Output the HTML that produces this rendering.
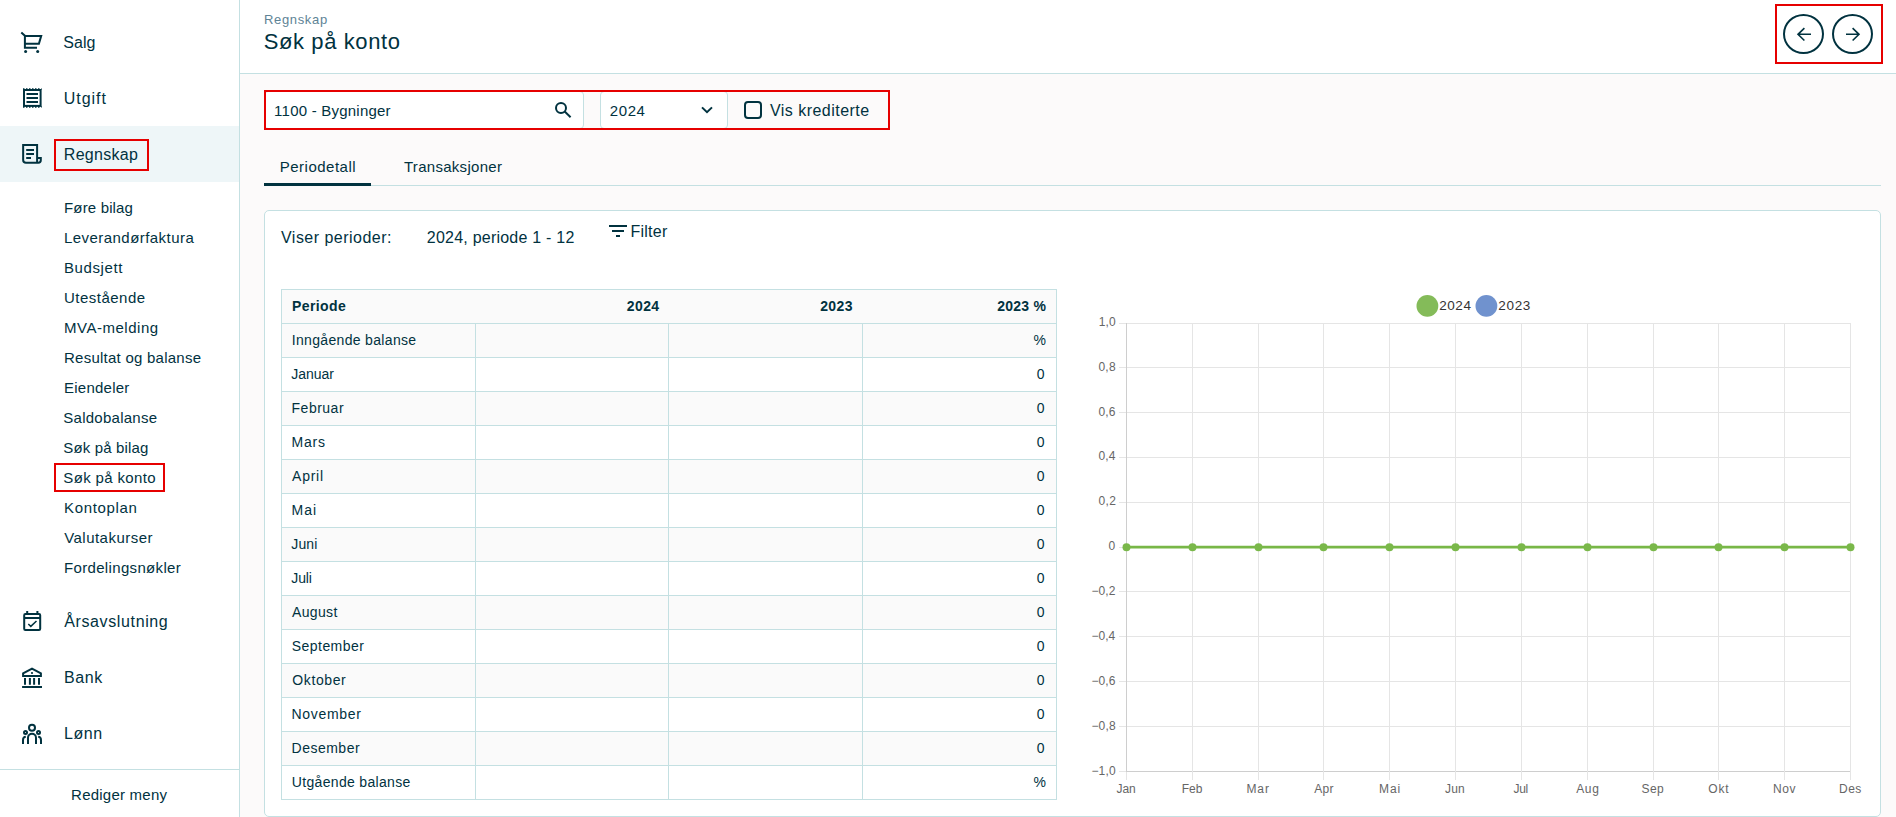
<!DOCTYPE html>
<html lang="no">
<head>
<meta charset="utf-8">
<title>Søk på konto</title>
<style>
*{box-sizing:border-box;margin:0;padding:0}
html,body{width:1896px;height:817px;overflow:hidden}
body{font-family:"Liberation Sans",sans-serif;color:#01323f;background:#fcfafa;position:relative}
.b,.ic,.t{position:absolute}
.t{line-height:20px;white-space:nowrap}
.red{border:2px solid #e60000}
</style>
</head>
<body>
<div class="b" style="left:0px;top:0px;width:239px;height:817px;background:#fff;"></div>
<div class="b" style="left:239px;top:0px;width:1px;height:817px;background:#c4e0e2;"></div>
<div class="b" style="left:0px;top:126px;width:239px;height:56px;background:#eef6f8;"></div>
<div class="b" style="left:0px;top:769px;width:239px;height:1px;background:#c4e0e2;"></div>
<svg class="ic" style="left:20px;top:30px" width="24" height="24" viewBox="0 0 24 24" fill="none" stroke="#01323f" stroke-width="2"><path d="M1.3 2.4 L4.9 5.7 V17.8 H17 M4.9 5.9 H21.2 L18.9 13.8 H4.9"/><circle cx="5.6" cy="21.4" r="1.5" fill="#01323f" stroke="none"/><circle cx="17.7" cy="21.4" r="1.5" fill="#01323f" stroke="none"/></svg>
<svg class="ic" style="left:20px;top:86px" width="24" height="24" viewBox="0 0 24 24" fill="none" stroke="#01323f" stroke-width="2"><rect x="4" y="4" width="16.6" height="15.9"/><path d="M6.5 8 H18 M6.5 12 H18 M6.5 16 H18"/><path d="M3 3 h18.6" stroke-dasharray="1.5 1.5" stroke-width="1.6"/><path d="M3 20.9 h18.6" stroke-dasharray="1.5 1.5" stroke-width="1.6"/></svg>
<svg class="ic" style="left:20px;top:142px" width="24" height="24" viewBox="0 0 24 24" fill="none" stroke="#01323f" stroke-width="2"><path d="M17.1 20.7 V2.9 H3.15 V18 Q3.15 20.75 6 20.75 H18.3 Q20.8 20.75 20.8 18.3 V16.1 H17.1"/><path d="M6.2 8 H14 M6.2 12 H14 M6.2 16 H11"/></svg>
<svg class="ic" style="left:20px;top:609px" width="24" height="24" viewBox="0 0 24 24" fill="none" stroke="#01323f" stroke-width="2"><rect x="4.2" y="5.1" width="16" height="15.8" rx="1.2"/><path d="M4.2 9 H20.2 M7.2 2 V5 M17.4 2 V5"/><path d="M8.3 15 L10.8 17.4 L16.5 12" stroke-width="1.5"/></svg>
<svg class="ic" style="left:20px;top:665px" width="24" height="24" viewBox="0 0 24 24" fill="none" stroke="#01323f" stroke-width="2"><path d="M3.1 10.9 V8.4 L12 3.6 L20.9 8.4 V10.9 Z"/><circle cx="12" cy="8" r="1.1" fill="#01323f" stroke="none"/><path d="M5 13 V19.8 M9.9 13 V19.8 M14.1 13 V19.8 M19 13 V19.8 M2.1 22 H22"/></svg>
<svg class="ic" style="left:20px;top:721px" width="24" height="24" viewBox="0 0 24 24" fill="none" stroke="#01323f" stroke-width="2"><circle cx="12" cy="6.8" r="3"/><circle cx="5.5" cy="11.4" r="1.5"/><circle cx="18.5" cy="11.4" r="1.5"/><path d="M8 23 V16.7 a4 4 0 0 1 8 0 V23 M3 23 V19 Q3 16 5.8 15.8 M21 23 V19 Q21 16 18.2 15.8"/></svg>
<div class="b red" style="left:54px;top:139px;width:95px;height:32px"></div>
<div class="b red" style="left:54px;top:463px;width:111px;height:29px"></div>
<div class="b" style="left:240px;top:0px;width:1656px;height:73px;background:#fff;"></div>
<div class="b" style="left:240px;top:73px;width:1656px;height:1px;background:#c4e0e2;"></div>
<div class="b" style="left:1783.0px;top:14px;width:41px;height:40px;border:2px solid #01323f;border-radius:50%"></div>
<svg class="ic" style="left:1794.0px;top:24px" width="20" height="20" viewBox="0 0 20 20" fill="none" stroke="#01323f" stroke-width="1.6"><path d="M17 10.3 H4 M10.4 4.2 L4 10.3 L10.4 16.5"/></svg>
<div class="b" style="left:1832.0px;top:14px;width:41px;height:40px;border:2px solid #01323f;border-radius:50%"></div>
<svg class="ic" style="left:1842.5px;top:24px" width="20" height="20" viewBox="0 0 20 20" fill="none" stroke="#01323f" stroke-width="1.6"><path d="M3 10.3 H16 M9.6 4.2 L16 10.3 L9.6 16.5"/></svg>
<div class="b red" style="left:1775px;top:4px;width:108px;height:60px"></div>
<div class="b" style="left:264px;top:91px;width:320px;height:38px;background:#fff;border:1px solid #c4e0e2;border-radius:4px"></div>
<svg class="ic" style="left:552px;top:98px" width="24" height="24" viewBox="0 0 24 24" fill="none" stroke="#01323f" stroke-width="2"><circle cx="9" cy="9.9" r="5"/><path d="M12.7 13.6 L18.6 19.2"/></svg>
<div class="b" style="left:600px;top:91px;width:128px;height:38px;background:#fff;border:1px solid #c4e0e2;border-radius:4px"></div>
<svg class="ic" style="left:695px;top:98px" width="24" height="24" viewBox="0 0 24 24" fill="none" stroke="#01323f" stroke-width="2"><path d="M7 9.4 L12 14.2 L17 9.4"/></svg>
<div class="b" style="left:744px;top:101px;width:18px;height:18px;background:transparent;border:2px solid #01323f;border-radius:4px"></div>
<div class="b red" style="left:264px;top:90px;width:626px;height:40px"></div>
<div class="b" style="left:264px;top:185px;width:1617px;height:1px;background:#c4e0e2;"></div>
<div class="b" style="left:264px;top:183px;width:107px;height:3px;background:#01323f;"></div>
<div class="b" style="left:264px;top:210px;width:1617px;height:607px;background:#fff;border:1px solid #c4e0e2;border-radius:5px"></div>
<svg class="ic" style="left:606px;top:219px" width="24" height="24" viewBox="0 0 24 24" fill="#01323f"><path d="M3 6h18v2H3zM6 11h12v2H6zM10 16h4v2h-4z"/></svg>
<div class="b" style="left:281px;top:289px;width:776px;height:511px;background:#fff;"></div>
<div class="b" style="left:281px;top:289px;width:776px;height:34px;background:#fafafa;"></div>
<div class="b" style="left:281px;top:323px;width:776px;height:34px;background:#fafafa;"></div>
<div class="b" style="left:281px;top:391px;width:776px;height:34px;background:#fafafa;"></div>
<div class="b" style="left:281px;top:459px;width:776px;height:34px;background:#fafafa;"></div>
<div class="b" style="left:281px;top:527px;width:776px;height:34px;background:#fafafa;"></div>
<div class="b" style="left:281px;top:595px;width:776px;height:34px;background:#fafafa;"></div>
<div class="b" style="left:281px;top:663px;width:776px;height:34px;background:#fafafa;"></div>
<div class="b" style="left:281px;top:731px;width:776px;height:34px;background:#fafafa;"></div>
<div class="b" style="left:281px;top:289px;width:776px;height:1px;background:#c4e0e2;"></div>
<div class="b" style="left:281px;top:323px;width:776px;height:1px;background:#c4e0e2;"></div>
<div class="b" style="left:281px;top:357px;width:776px;height:1px;background:#c4e0e2;"></div>
<div class="b" style="left:281px;top:391px;width:776px;height:1px;background:#c4e0e2;"></div>
<div class="b" style="left:281px;top:425px;width:776px;height:1px;background:#c4e0e2;"></div>
<div class="b" style="left:281px;top:459px;width:776px;height:1px;background:#c4e0e2;"></div>
<div class="b" style="left:281px;top:493px;width:776px;height:1px;background:#c4e0e2;"></div>
<div class="b" style="left:281px;top:527px;width:776px;height:1px;background:#c4e0e2;"></div>
<div class="b" style="left:281px;top:561px;width:776px;height:1px;background:#c4e0e2;"></div>
<div class="b" style="left:281px;top:595px;width:776px;height:1px;background:#c4e0e2;"></div>
<div class="b" style="left:281px;top:629px;width:776px;height:1px;background:#c4e0e2;"></div>
<div class="b" style="left:281px;top:663px;width:776px;height:1px;background:#c4e0e2;"></div>
<div class="b" style="left:281px;top:697px;width:776px;height:1px;background:#c4e0e2;"></div>
<div class="b" style="left:281px;top:731px;width:776px;height:1px;background:#c4e0e2;"></div>
<div class="b" style="left:281px;top:765px;width:776px;height:1px;background:#c4e0e2;"></div>
<div class="b" style="left:281px;top:799px;width:776px;height:1px;background:#c4e0e2;"></div>
<div class="b" style="left:281px;top:289px;width:1px;height:511px;background:#c4e0e2;"></div>
<div class="b" style="left:1056px;top:289px;width:1px;height:511px;background:#c4e0e2;"></div>
<div class="b" style="left:475px;top:323px;width:1px;height:477px;background:#c4e0e2;"></div>
<div class="b" style="left:668px;top:323px;width:1px;height:477px;background:#c4e0e2;"></div>
<div class="b" style="left:862px;top:323px;width:1px;height:477px;background:#c4e0e2;"></div>
<svg class="ic" style="left:1080px;top:290px" width="800" height="520" viewBox="0 0 800 520" shape-rendering="crispEdges"><rect x="46" y="33" width="725" height="1" fill="#e5e5e5"/><rect x="39" y="33" width="7" height="1" fill="#e5e5e5"/><rect x="46" y="77" width="725" height="1" fill="#e5e5e5"/><rect x="39" y="77" width="7" height="1" fill="#e5e5e5"/><rect x="46" y="122" width="725" height="1" fill="#e5e5e5"/><rect x="39" y="122" width="7" height="1" fill="#e5e5e5"/><rect x="46" y="167" width="725" height="1" fill="#e5e5e5"/><rect x="39" y="167" width="7" height="1" fill="#e5e5e5"/><rect x="46" y="212" width="725" height="1" fill="#e5e5e5"/><rect x="39" y="212" width="7" height="1" fill="#e5e5e5"/><rect x="46" y="257" width="725" height="1" fill="#cecece"/><rect x="39" y="257" width="7" height="1" fill="#e5e5e5"/><rect x="46" y="301" width="725" height="1" fill="#e5e5e5"/><rect x="39" y="301" width="7" height="1" fill="#e5e5e5"/><rect x="46" y="346" width="725" height="1" fill="#e5e5e5"/><rect x="39" y="346" width="7" height="1" fill="#e5e5e5"/><rect x="46" y="391" width="725" height="1" fill="#e5e5e5"/><rect x="39" y="391" width="7" height="1" fill="#e5e5e5"/><rect x="46" y="436" width="725" height="1" fill="#e5e5e5"/><rect x="39" y="436" width="7" height="1" fill="#e5e5e5"/><rect x="46" y="481" width="725" height="1" fill="#cecece"/><rect x="39" y="481" width="7" height="1" fill="#e5e5e5"/><rect x="46" y="33" width="1" height="449" fill="#cecece"/><rect x="46" y="482" width="1" height="8" fill="#e5e5e5"/><rect x="112" y="33" width="1" height="449" fill="#e5e5e5"/><rect x="112" y="482" width="1" height="8" fill="#e5e5e5"/><rect x="178" y="33" width="1" height="449" fill="#e5e5e5"/><rect x="178" y="482" width="1" height="8" fill="#e5e5e5"/><rect x="243" y="33" width="1" height="449" fill="#e5e5e5"/><rect x="243" y="482" width="1" height="8" fill="#e5e5e5"/><rect x="309" y="33" width="1" height="449" fill="#e5e5e5"/><rect x="309" y="482" width="1" height="8" fill="#e5e5e5"/><rect x="375" y="33" width="1" height="449" fill="#e5e5e5"/><rect x="375" y="482" width="1" height="8" fill="#e5e5e5"/><rect x="441" y="33" width="1" height="449" fill="#e5e5e5"/><rect x="441" y="482" width="1" height="8" fill="#e5e5e5"/><rect x="507" y="33" width="1" height="449" fill="#e5e5e5"/><rect x="507" y="482" width="1" height="8" fill="#e5e5e5"/><rect x="573" y="33" width="1" height="449" fill="#e5e5e5"/><rect x="573" y="482" width="1" height="8" fill="#e5e5e5"/><rect x="638" y="33" width="1" height="449" fill="#e5e5e5"/><rect x="638" y="482" width="1" height="8" fill="#e5e5e5"/><rect x="704" y="33" width="1" height="449" fill="#e5e5e5"/><rect x="704" y="482" width="1" height="8" fill="#e5e5e5"/><rect x="770" y="33" width="1" height="449" fill="#e5e5e5"/><rect x="770" y="482" width="1" height="8" fill="#e5e5e5"/><g shape-rendering="auto"><path d="M46.5 257.20000000000005 H770.5" stroke="#78b747" stroke-width="2.7"/><circle cx="46.5" cy="257.20000000000005" r="4" fill="#7ab84a"/><circle cx="112.5" cy="257.20000000000005" r="4" fill="#7ab84a"/><circle cx="178.5" cy="257.20000000000005" r="4" fill="#7ab84a"/><circle cx="243.5" cy="257.20000000000005" r="4" fill="#7ab84a"/><circle cx="309.5" cy="257.20000000000005" r="4" fill="#7ab84a"/><circle cx="375.5" cy="257.20000000000005" r="4" fill="#7ab84a"/><circle cx="441.5" cy="257.20000000000005" r="4" fill="#7ab84a"/><circle cx="507.5" cy="257.20000000000005" r="4" fill="#7ab84a"/><circle cx="573.5" cy="257.20000000000005" r="4" fill="#7ab84a"/><circle cx="638.5" cy="257.20000000000005" r="4" fill="#7ab84a"/><circle cx="704.5" cy="257.20000000000005" r="4" fill="#7ab84a"/><circle cx="770.5" cy="257.20000000000005" r="4" fill="#7ab84a"/><circle cx="347.4000000000001" cy="15.899999999999977" r="10.9" fill="#84bb59"/><circle cx="406.4000000000001" cy="15.899999999999977" r="10.9" fill="#7092ce"/></g></svg>
<span class="t" id="m0" style="left:63.37px;top:33.00px;font-size:16px;letter-spacing:0.023px;">Salg</span>
<span class="t" id="m1" style="left:63.72px;top:89.00px;font-size:16px;letter-spacing:0.975px;">Utgift</span>
<span class="t" id="m2" style="left:63.83px;top:145.00px;font-size:16px;letter-spacing:0.273px;">Regnskap</span>
<span class="t" id="m3" style="left:64.22px;top:612.00px;font-size:16px;letter-spacing:0.625px;">Årsavslutning</span>
<span class="t" id="m4" style="left:63.96px;top:668.00px;font-size:16px;letter-spacing:0.582px;">Bank</span>
<span class="t" id="m5" style="left:63.96px;top:724.00px;font-size:16px;letter-spacing:0.581px;">Lønn</span>
<span class="t" id="s0" style="left:64.01px;top:198.00px;font-size:15px;letter-spacing:0.159px;">Føre bilag</span>
<span class="t" id="s1" style="left:64.01px;top:228.00px;font-size:15px;letter-spacing:0.449px;">Leverandørfaktura</span>
<span class="t" id="s2" style="left:64.01px;top:258.00px;font-size:15px;letter-spacing:0.588px;">Budsjett</span>
<span class="t" id="s3" style="left:64.04px;top:288.00px;font-size:15px;letter-spacing:0.477px;">Utestående</span>
<span class="t" id="s4" style="left:63.96px;top:318.00px;font-size:15px;letter-spacing:0.523px;">MVA-melding</span>
<span class="t" id="s5" style="left:64.01px;top:348.00px;font-size:15px;letter-spacing:0.247px;">Resultat og balanse</span>
<span class="t" id="s6" style="left:64.01px;top:378.00px;font-size:15px;letter-spacing:0.237px;">Eiendeler</span>
<span class="t" id="s7" style="left:63.36px;top:408.00px;font-size:15px;letter-spacing:0.246px;">Saldobalanse</span>
<span class="t" id="s8" style="left:63.36px;top:438.00px;font-size:15px;letter-spacing:0.135px;">Søk på bilag</span>
<span class="t" id="s9" style="left:63.36px;top:468.00px;font-size:15px;letter-spacing:0.344px;">Søk på konto</span>
<span class="t" id="s10" style="left:64.01px;top:498.00px;font-size:15px;letter-spacing:0.666px;">Kontoplan</span>
<span class="t" id="s11" style="left:64.14px;top:528.00px;font-size:15px;letter-spacing:0.484px;">Valutakurser</span>
<span class="t" id="s12" style="left:64.01px;top:558.00px;font-size:15px;letter-spacing:0.336px;">Fordelingsnøkler</span>
<span class="t" id="foot" style="left:71.10px;top:785.00px;font-size:15px;letter-spacing:0.229px;">Rediger meny</span>
<span class="t" id="crumb" style="left:263.99px;top:10.00px;font-size:13px;letter-spacing:0.655px;color:#5e8396;">Regnskap</span>
<span class="t" id="title" style="left:263.71px;top:32.00px;font-size:22px;letter-spacing:0.604px;">Søk på konto</span>
<span class="t" id="inp" style="left:274.12px;top:101.00px;font-size:15px;letter-spacing:0.224px;">1100 - Bygninger</span>
<span class="t" id="sel" style="left:609.85px;top:101.00px;font-size:15px;letter-spacing:0.553px;">2024</span>
<span class="t" id="cbl" style="left:769.99px;top:101.00px;font-size:16px;letter-spacing:0.466px;">Vis krediterte</span>
<span class="t" id="tab0" style="left:279.79px;top:157.00px;font-size:15px;letter-spacing:0.494px;">Periodetall</span>
<span class="t" id="tab1" style="left:403.95px;top:157.00px;font-size:15px;letter-spacing:0.294px;">Transaksjoner</span>
<span class="t" id="vp" style="left:280.99px;top:228.00px;font-size:16px;letter-spacing:0.478px;">Viser perioder:</span>
<span class="t" id="vp2" style="left:426.83px;top:228.00px;font-size:16px;letter-spacing:0.223px;">2024, periode 1 - 12</span>
<span class="t" id="filt" style="left:630.46px;top:222.00px;font-size:16px;letter-spacing:0.243px;">Filter</span>
<span class="t" id="th0" style="left:292.08px;top:296.00px;font-size:14px;letter-spacing:0.374px;font-weight:bold;">Periode</span>
<span class="t" id="th1" style="left:626.80px;top:296.00px;font-size:14px;letter-spacing:0.389px;font-weight:bold;">2024</span>
<span class="t" id="th2" style="left:820.13px;top:296.00px;font-size:14px;letter-spacing:0.439px;font-weight:bold;">2023</span>
<span class="t" id="th3" style="left:997.18px;top:296.00px;font-size:14px;letter-spacing:0.246px;font-weight:bold;">2023 %</span>
<span class="t" id="r0" style="left:291.74px;top:330.00px;font-size:14px;letter-spacing:0.331px;">Inngående balanse</span>
<span class="t" id="v0" style="left:1033.60px;top:330.00px;font-size:14px;">%</span>
<span class="t" id="r1" style="left:291.25px;top:364.00px;font-size:14px;letter-spacing:-0.027px;">Januar</span>
<span class="t" id="v1" style="left:1036.85px;top:364.00px;font-size:14px;">0</span>
<span class="t" id="r2" style="left:291.57px;top:398.00px;font-size:14px;letter-spacing:0.494px;">Februar</span>
<span class="t" id="v2" style="left:1036.85px;top:398.00px;font-size:14px;">0</span>
<span class="t" id="r3" style="left:291.57px;top:432.00px;font-size:14px;letter-spacing:0.752px;">Mars</span>
<span class="t" id="v3" style="left:1036.85px;top:432.00px;font-size:14px;">0</span>
<span class="t" id="r4" style="left:292.08px;top:466.00px;font-size:14px;letter-spacing:0.726px;">April</span>
<span class="t" id="v4" style="left:1036.85px;top:466.00px;font-size:14px;">0</span>
<span class="t" id="r5" style="left:291.57px;top:500.00px;font-size:14px;letter-spacing:1.000px;">Mai</span>
<span class="t" id="v5" style="left:1036.85px;top:500.00px;font-size:14px;">0</span>
<span class="t" id="r6" style="left:291.25px;top:534.00px;font-size:14px;letter-spacing:0.141px;">Juni</span>
<span class="t" id="v6" style="left:1036.85px;top:534.00px;font-size:14px;">0</span>
<span class="t" id="r7" style="left:291.25px;top:568.00px;font-size:14px;letter-spacing:-0.104px;">Juli</span>
<span class="t" id="v7" style="left:1036.85px;top:568.00px;font-size:14px;">0</span>
<span class="t" id="r8" style="left:292.08px;top:602.00px;font-size:14px;letter-spacing:0.325px;">August</span>
<span class="t" id="v8" style="left:1036.85px;top:602.00px;font-size:14px;">0</span>
<span class="t" id="r9" style="left:291.85px;top:636.00px;font-size:14px;letter-spacing:0.433px;">September</span>
<span class="t" id="v9" style="left:1036.85px;top:636.00px;font-size:14px;">0</span>
<span class="t" id="r10" style="left:292.35px;top:670.00px;font-size:14px;letter-spacing:0.590px;">Oktober</span>
<span class="t" id="v10" style="left:1036.85px;top:670.00px;font-size:14px;">0</span>
<span class="t" id="r11" style="left:291.57px;top:704.00px;font-size:14px;letter-spacing:0.675px;">November</span>
<span class="t" id="v11" style="left:1036.85px;top:704.00px;font-size:14px;">0</span>
<span class="t" id="r12" style="left:291.57px;top:738.00px;font-size:14px;letter-spacing:0.491px;">Desember</span>
<span class="t" id="v12" style="left:1036.85px;top:738.00px;font-size:14px;">0</span>
<span class="t" id="r13" style="left:291.80px;top:772.00px;font-size:14px;letter-spacing:0.327px;">Utgående balanse</span>
<span class="t" id="v13" style="left:1033.60px;top:772.00px;font-size:14px;">%</span>
<span class="t" id="y0" style="left:1098.67px;top:312.00px;font-size:12px;letter-spacing:0.162px;color:#666;">1,0</span>
<span class="t" id="y1" style="left:1098.38px;top:357.00px;font-size:12px;letter-spacing:0.259px;color:#666;">0,8</span>
<span class="t" id="y2" style="left:1098.41px;top:402.00px;font-size:12px;letter-spacing:0.191px;color:#666;">0,6</span>
<span class="t" id="y3" style="left:1098.38px;top:446.00px;font-size:12px;letter-spacing:0.216px;color:#666;">0,4</span>
<span class="t" id="y4" style="left:1098.38px;top:491.00px;font-size:12px;letter-spacing:0.413px;color:#666;">0,2</span>
<span class="t" id="y5" style="left:1108.57px;top:536.00px;font-size:12px;color:#666;">0</span>
<span class="t" id="y6" style="left:1091.39px;top:581.00px;font-size:12px;letter-spacing:0.157px;color:#666;">−0,2</span>
<span class="t" id="y7" style="left:1091.39px;top:626.00px;font-size:12px;letter-spacing:0.062px;color:#666;">−0,4</span>
<span class="t" id="y8" style="left:1091.44px;top:671.00px;font-size:12px;letter-spacing:0.114px;color:#666;">−0,6</span>
<span class="t" id="y9" style="left:1091.39px;top:716.00px;font-size:12px;letter-spacing:0.230px;color:#666;">−0,8</span>
<span class="t" id="y10" style="left:1091.39px;top:761.00px;font-size:12px;letter-spacing:0.221px;color:#666;">−1,0</span>
<span class="t" id="x0" style="left:1116.60px;top:779.00px;font-size:12px;letter-spacing:-0.145px;color:#666;">Jan</span>
<span class="t" id="x1" style="left:1181.68px;top:779.00px;font-size:12px;letter-spacing:0.001px;color:#666;">Feb</span>
<span class="t" id="x2" style="left:1246.39px;top:779.00px;font-size:12px;letter-spacing:1.000px;color:#666;">Mar</span>
<span class="t" id="x3" style="left:1314.19px;top:779.00px;font-size:12px;letter-spacing:0.363px;color:#666;">Apr</span>
<span class="t" id="x4" style="left:1378.91px;top:779.00px;font-size:12px;letter-spacing:1.000px;color:#666;">Mai</span>
<span class="t" id="x5" style="left:1444.99px;top:779.00px;font-size:12px;letter-spacing:0.230px;color:#666;">Jun</span>
<span class="t" id="x6" style="left:1513.49px;top:779.00px;font-size:12px;letter-spacing:-0.286px;color:#666;">Jul</span>
<span class="t" id="x7" style="left:1576.18px;top:779.00px;font-size:12px;letter-spacing:0.653px;color:#666;">Aug</span>
<span class="t" id="x8" style="left:1641.54px;top:779.00px;font-size:12px;letter-spacing:0.408px;color:#666;">Sep</span>
<span class="t" id="x9" style="left:1708.20px;top:779.00px;font-size:12px;letter-spacing:0.908px;color:#666;">Okt</span>
<span class="t" id="x10" style="left:1772.98px;top:779.00px;font-size:12px;letter-spacing:0.641px;color:#666;">Nov</span>
<span class="t" id="x11" style="left:1839.11px;top:779.00px;font-size:12px;letter-spacing:0.422px;color:#666;">Des</span>
<span class="t" id="lg0" style="left:1439.33px;top:296.00px;font-size:13.5px;letter-spacing:0.515px;color:#333;">2024</span>
<span class="t" id="lg1" style="left:1498.25px;top:296.00px;font-size:13.5px;letter-spacing:0.681px;color:#333;">2023</span>
</body>
</html>
